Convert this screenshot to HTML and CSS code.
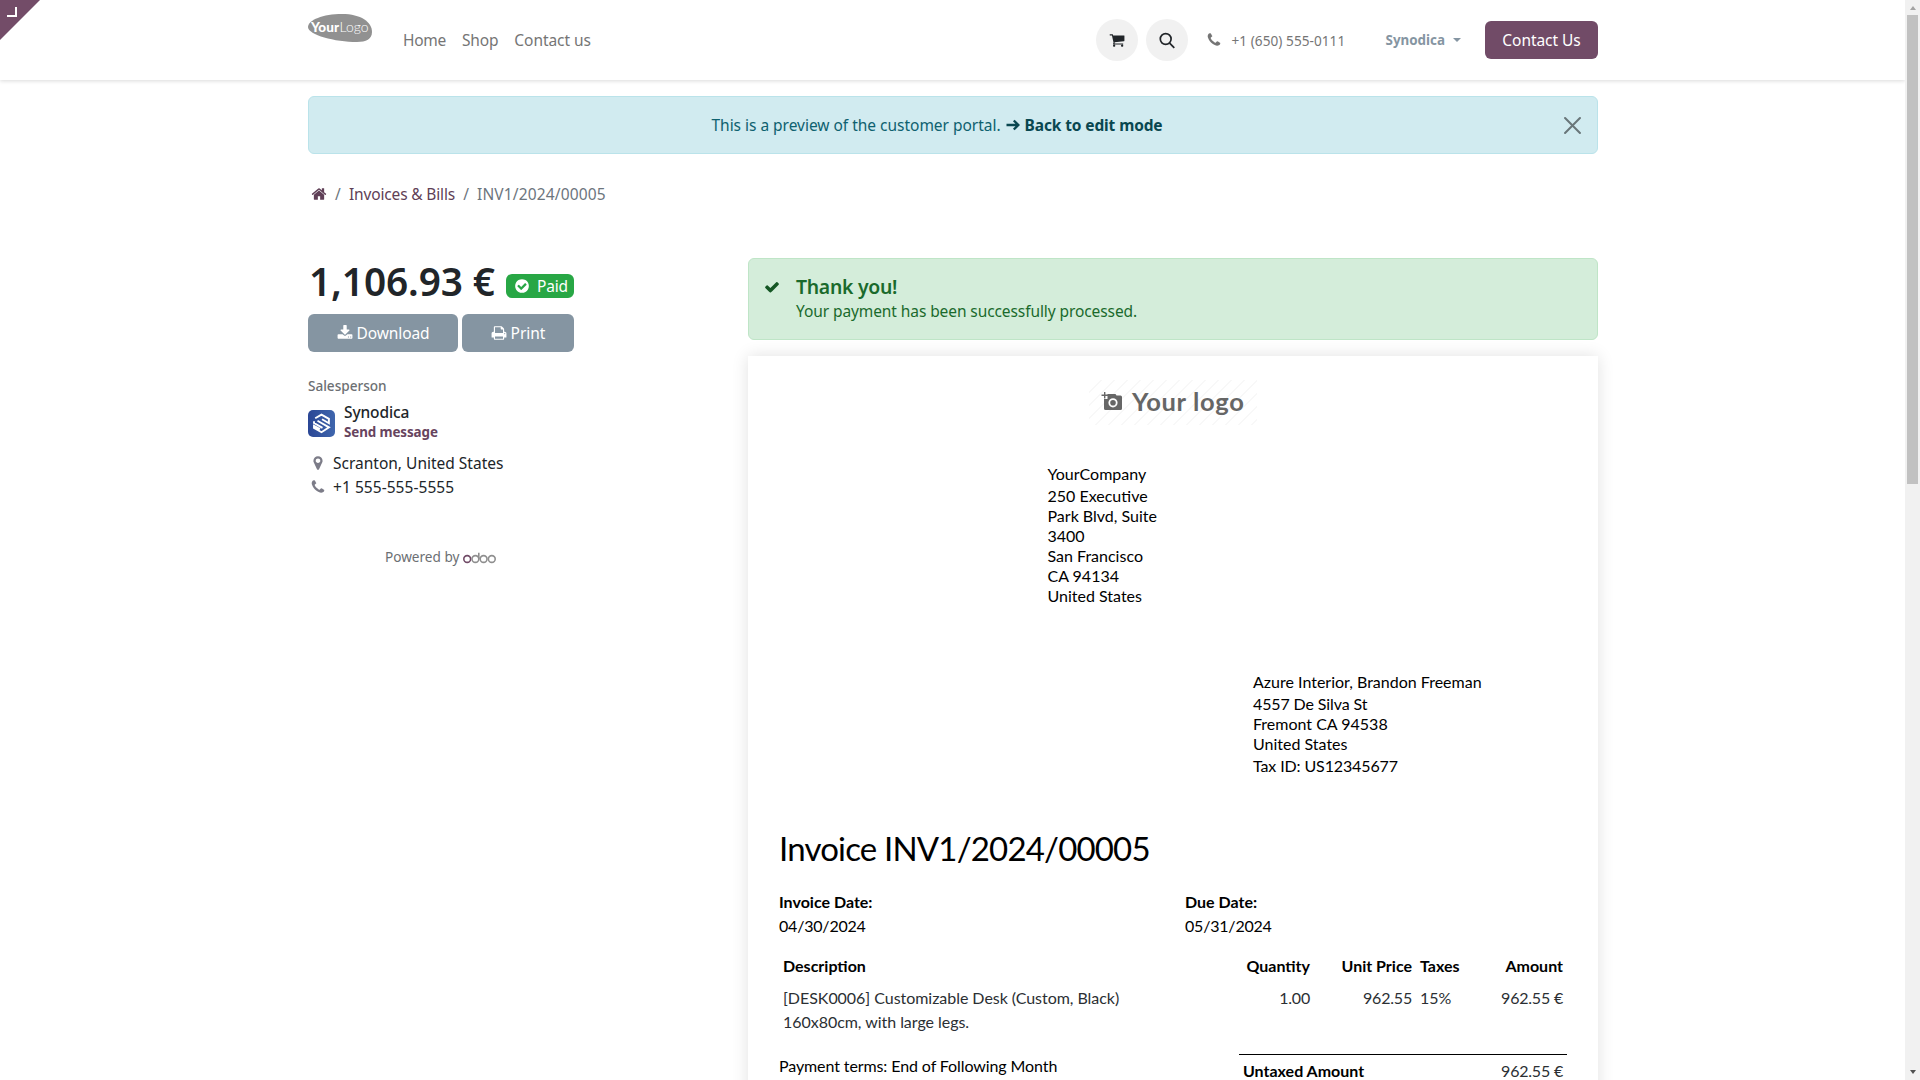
FILE: index.html
```html
<!DOCTYPE html>
<html lang="en">
<head>
<meta charset="utf-8">
<title>INV1/2024/00005</title>
<link rel="stylesheet" href="styles.css">
</head>
<body>
<div class="page">
  <header class="header">
    <div class="corner"><span class="corner-mark"></span></div>
    <div class="container header-row">
      <svg class="brand" viewBox="0 0 64 28">
        <path d="M0 13C0 6 15 0 34 0C53 0 64 8 64 18C64 25 58 28 49 28C27 28 0 21 0 13Z" fill="#919191"/>
        <text x="3" y="18" class="brand-bold" textLength="28" lengthAdjust="spacingAndGlyphs">Your</text>
        <text x="31.5" y="18" class="brand-light" textLength="29" lengthAdjust="spacingAndGlyphs">Logo</text>
      </svg>
      <nav class="nav"><a class="nav-home">Home</a><a class="nav-shop">Shop</a><a class="nav-contact">Contact us</a></nav>
      <div class="tools">
        <span class="round"><svg class="fa cart" viewBox="0 0 1792 1792"><path d="M704 1536q0 52-38 90t-90 38-90-38-38-90 38-90 90-38 90 38 38 90zm896 0q0 52-38 90t-90 38-90-38-38-90 38-90 90-38 90 38 38 90zm128-1088v512q0 24-16.500 42.500t-40.500 21.500l-1044 122q13 60 13 70 0 16-24 64h920q26 0 45 19t19 45-19 45-45 19h-1024q-26 0-45-19t-19-45q0-11 8-31.500t16-36 21.500-40 15.500-29.500l-177-823h-204q-26 0-45-19t-19-45 19-45 45-19h256q16 0 28.500 6.500t19.500 15.500 13 24.500 8 26 5.500 29.500 4.500 26h1201q26 0 45 19t19 45z"/></svg></span>
        <span class="round"><svg class="search" viewBox="0 0 16 16"><circle cx="6.7" cy="6.5" r="5.4"/><path d="M10.6 10.6L15.3 15.4"/></svg></span>
        <svg class="fa tel-icon" viewBox="0 0 1792 1792"><path d="M1600 1240q0 27-10 70.500t-21 68.500q-21 50-122 106-94 51-186 51-27 0-52.500-3.500t-57.500-12.500-47.500-14.500-55.500-20.500-49-18q-98-35-175-83-128-79-264.500-215.500t-215.500-264.500q-48-77-83-175-3-9-18-49t-20.500-55.500-14.500-47.500-12.500-57.500-3.500-52.500q0-92 51-186 56-101 106-122 25-11 68.500-21t70.500-10q14 0 21 3 18 6 53 76 11 19 30 54t35 63.500 31 53.500q3 4 17.500 25t21.500 35.500 7 28.500q0 20-28.500 50t-62 55-62 53-28.500 46q0 9 5 22.500t8.500 20.500 14 24 11.500 19q76 137 174 235t235 174q2 1 19 11.500t24 14 20.500 8.500 22.500 5q18 0 46-28.500t53-62 55-62 50-28.500q14 0 28.500 7t35.500 21.500 25 17.500q25 15 53.500 31t63.500 35 54 30q70 35 76 53 3 7 3 21z"/></svg>
        <span class="tel">+1 (650) 555-0111</span>
        <span class="user">Synodica</span><span class="caret"></span>
        <a class="cta">Contact Us</a>
      </div>
    </div>
  </header>

  <main class="container">
    <div class="alert info">
      <span class="info-text">This is a preview of the customer portal.</span>
      <svg class="arrow" viewBox="0 0 14 14"><path d="M0.5 7H12M7.8 2.5L12.3 7L7.8 11.5"/></svg>
      <b class="info-link">Back to edit mode</b>
      <svg class="close" viewBox="0 0 16 16"><path d="M1 1L15 15M15 1L1 15"/></svg>
    </div>

    <div class="crumbs">
      <svg class="fa home" viewBox="0 0 1792 1792"><path d="M1472 992v480q0 26-19 45t-45 19h-384v-384h-256v384h-384q-26 0-45-19t-19-45v-480q0-1 .5-3t.5-3l575-474 575 474q1 2 1 6zm223-69l-62 74q-8 9-21 11h-3q-13 0-21-7l-692-577-692 577q-12 8-24 7-13-2-21-11l-62-74q-8-10-7-23.500t11-21.500l719-599q32-26 76-26t76 26l244 204v-195q0-14 9-23t23-9h192q14 0 23 9t9 23v408l219 182q10 8 11 21.500t-7 23.500z"/></svg>
      <span class="sep">/</span><a class="crumb-link">Invoices &amp; Bills</a><span class="sep">/</span><span class="crumb-here">INV1/2024/00005</span>
    </div>

    <div class="columns">
      <aside class="side">
        <div class="amount-row">
          <span class="amount">1,106.93 €</span>
          <span class="badge"><svg class="fa" viewBox="0 0 1792 1792"><path d="M1412 734q0-28-18-46l-91-90q-19-19-45-19t-45 19l-408 407-226-226q-19-19-45-19t-45 19l-91 90q-18 18-18 46 0 27 18 45l362 362q19 19 45 19 27 0 46-19l543-543q18-18 18-45zm252 162q0 209-103 385.5t-279.5 279.500-385.500 103-385.500-103-279.500-279.500-103-385.500 103-385.500 279.500-279.500 385.500-103 385.500 103 279.500 279.500 103 385.500z"/></svg>Paid</span>
        </div>
        <div class="buttons">
          <a class="btn download"><svg class="fa" viewBox="0 0 1792 1792"><path d="M1344 1344q0-26-19-45t-45-19-45 19-19 45 19 45 45 19 45-19 19-45zm256 0q0-26-19-45t-45-19-45 19-19 45 19 45 45 19 45-19 19-45zm128-224v320q0 40-28 68t-68 28h-1472q-40 0-68-28t-28-68v-320q0-40 28-68t68-28h465l135 136q58 56 136 56t136-56l136-136h464q40 0 68 28t28 68zm-325-569q17 41-14 70l-448 448q-18 19-45 19t-45-19l-448-448q-31-29-14-70 17-39 59-39h256v-448q0-26 19-45t45-19h256q26 0 45 19t19 45v448h256q42 0 59 39z"/></svg>Download</a>
          <a class="btn print"><svg class="fa" viewBox="0 0 1792 1792"><path d="M448 1536h896v-256h-896v256zm0-640h896v-384h-160q-40 0-68-28t-28-68v-160h-640v640zm1152 64q0-26-19-45t-45-19-45 19-19 45 19 45 45 19 45-19 19-45zm128 0v416q0 13-9.500 22.500t-22.500 9.500h-224v160q0 40-28 68t-68 28h-960q-40 0-68-28t-28-68v-160h-224q-13 0-22.500-9.500t-9.500-22.500v-416q0-79 56.500-135.500t135.500-56.500h64v-544q0-40 28-68t68-28h672q40 0 88 20t76 48l152 152q28 28 48 76t20 88v256h64q79 0 135.500 56.500t56.500 135.500z"/></svg>Print</a>
        </div>
        <div class="label">Salesperson</div>
        <div class="person">
          <svg class="avatar" viewBox="0 0 27 27">
            <defs><linearGradient id="g" x1="0" x2="1"><stop offset="0" stop-color="#2a4695"/><stop offset="1" stop-color="#3f66ad"/></linearGradient></defs>
            <rect width="27" height="27" rx="5" fill="url(#g)"/>
            <path d="M7.200 8.200L13.500 4.600L20.900 8.800V13.200L14 9.200M6 11.200V13L14.500 17.900M9.500 10.800L21 17.400L13.500 22.200L6 17.900V15.800L12 19.200" fill="none" stroke="#fff" stroke-width="1.900"/>
          </svg>
          <div>
            <div class="person-name">Synodica</div>
            <div class="person-link">Send message</div>
          </div>
        </div>
        <div class="contact">
          <svg class="fa" viewBox="0 0 1792 1792"><path d="M1152 640q0-106-75-181t-181-75-181 75-75 181 75 181 181 75 181-75 75-181zm256 0q0 109-33 179l-364 774q-16 33-47.500 52t-67.500 19-67.500-19-46.500-52l-365-774q-33-70-33-179 0-212 150-362t362-150 362 150 150 362z"/></svg><span class="city">Scranton, United States</span>
        </div>
        <div class="contact">
          <svg class="fa" viewBox="0 0 1792 1792"><path d="M1600 1240q0 27-10 70.500t-21 68.500q-21 50-122 106-94 51-186 51-27 0-52.500-3.500t-57.500-12.500-47.500-14.500-55.500-20.500-49-18q-98-35-175-83-128-79-264.500-215.500t-215.500-264.500q-48-77-83-175-3-9-18-49t-20.500-55.500-14.500-47.500-12.500-57.500-3.500-52.500q0-92 51-186 56-101 106-122 25-11 68.500-21t70.500-10q14 0 21 3 18 6 53 76 11 19 30 54t35 63.500 31 53.500q3 4 17.500 25t21.500 35.500 7 28.500q0 20-28.500 50t-62 55-62 53-28.500 46q0 9 5 22.500t8.500 20.500 14 24 11.500 19q76 137 174 235t235 174q2 1 19 11.500t24 14 20.500 8.500 22.500 5q18 0 46-28.500t53-62 55-62 50-28.500q14 0 28.500 7t35.500 21.500 25 17.500q25 15 53.500 31t63.500 35 54 30q70 35 76 53 3 7 3 21z"/></svg><span>+1 555-555-5555</span>
        </div>
        <div class="powered">Powered by
          <svg class="odoo" viewBox="0 0 33 12" fill="none" stroke="#8f8f8f" stroke-width="1.600"><circle cx="4.200" cy="7" r="3.400" stroke="#714b67"/><circle cx="12.400" cy="7" r="3.400"/><path d="M15.800 7V0.800"/><circle cx="20.600" cy="7" r="3.400"/><circle cx="28.800" cy="7" r="3.400"/></svg>
        </div>
      </aside>

      <section class="content">
        <div class="alert success">
          <svg class="fa check" viewBox="0 0 1792 1792"><path d="M1671 566q0 40-28 68l-724 724-136 136q-28 28-68 28t-68-28l-136-136-362-362q-28-28-28-68t28-68l136-136q28-28 68-28t68 28l294 295 656-657q28-28 68-28t68 28l136 136q28 28 28 68z"/></svg>
          <div>
            <div class="thanks">Thank you!</div>
            <div class="thanks-text">Your payment has been successfully processed.</div>
          </div>
        </div>

        <article class="invoice">
          <div class="logo">
            <svg class="camera" viewBox="0 0 22 20"><path fill="#666" fill-rule="evenodd" d="M6.500 6V3H14.500L15.500 4.500H19.500Q21 4.500 21 6V17.500Q21 19 19.500 19H4.500Q3 19 3 17.500V8H6.500ZM12 7.200A4.600 4.600 0 1 0 12 16.400A4.600 4.600 0 1 0 12 7.200ZM12 9A2.800 2.800 0 1 1 12 14.600A2.800 2.800 0 1 1 12 9Z"/><path d="M0.500 4.300H7M3.700 1V7.500" stroke="#666" stroke-width="1.400"/></svg>
            <span class="logo-text">Your logo</span>
          </div>
          <div class="company">
            <div class="name">YourCompany</div>
            <div>250 Executive</div><div>Park Blvd, Suite</div><div>3400</div><div>San Francisco</div><div>CA 94134</div><div>United States</div>
          </div>
          <div class="customer">
            <div class="name">Azure Interior, Brandon Freeman</div>
            <div class="tight">4557 De Silva St</div><div>Fremont CA 94538</div><div>United States</div>
            <div class="name tight">Tax ID: US12345677</div>
          </div>
          <h2 class="title">Invoice INV1/2024/00005</h2>
          <div class="dates">
            <div><b>Invoice Date:</b><br><span class="num">04/30/2024</span></div>
            <div><b>Due Date:</b><br><span class="num">05/31/2024</span></div>
          </div>
          <div class="line head"><span>Description</span><span>Quantity</span><span>Unit Price</span><span class="tax">Taxes</span><span>Amount</span></div>
          <div class="line item"><span>[DESK0006] Customizable Desk (Custom, Black)<br>160x80cm, with large legs.</span><span class="num">1.00</span><span class="num">962.55</span><span class="tax">15%</span><span class="num">962.55 €</span></div>
          <div class="bottom">
            <div class="terms">Payment terms: End of Following Month</div>
            <div class="total"><b>Untaxed Amount</b><span class="num">962.55 €</span></div>
          </div>
        </article>
      </section>
    </div>
  </main>
</div>
<div class="scrollbar"><span class="up"></span><span class="thumb"></span><span class="down"></span></div>
</body>
</html>
```

FILE: styles.css
```css
* { box-sizing: border-box; }
body {
  margin: 0;
  display: grid;
  grid-template-columns: 1fr 15px;
  height: 100vh;
  overflow: hidden;
  background: #fff;
  color: #212529;
  font: 15.5px/24px "Noto Sans", "Open Sans", sans-serif;
}
.page { height: 100vh; overflow: hidden; }
.container { width: 1290px; margin: 0 auto 0 308px; }
.fa { width: 16px; height: 16px; fill: currentColor; flex: none; }

/* header */
.header { position: relative; height: 80px; box-shadow: 0 1px 4px rgba(0,0,0,.15); }
.corner {
  position: absolute; left: 0; top: 0; width: 40px; height: 40px;
  background: #734c68; clip-path: polygon(0 0, 100% 0, 0 100%);
}
.corner-mark {
  position: absolute; left: 7px; top: 7px; width: 10px; height: 10px;
  border: solid #fff; border-width: 0 2px 2px 0;
}
.header-row { display: flex; align-items: flex-start; height: 80px; }
.brand { width: 64px; height: 28px; margin-top: 14px; flex: none; }
.brand text { fill: #fff; font-family: Lato, sans-serif; font-size: 14px; }
.brand-bold { font-weight: 900; }
.brand-light { font-weight: 300; }
.nav { display: flex; margin: 28px 0 0 31px; color: #757575; }
.nav a { margin-right: 16px; }
.nav-home { letter-spacing: -.3px; }
.nav-shop { letter-spacing: -.15px; }
.nav-contact { letter-spacing: -.05px; }
.tools { display: flex; align-items: center; height: 80px; margin-left: auto; }
.round {
  display: flex; align-items: center; justify-content: center;
  width: 42px; height: 42px; margin-right: 8px; border-radius: 50%; background: #f1f1f1;
}
.cart { width: 16px; height: 16px; }
.search { width: 16px; height: 17px; fill: none; stroke: #212529; stroke-width: 1.7; }
.tel-icon { margin-left: 10px; color: #757575; }
.tel { width: 113px; margin: 1px 0 0 10px; color: #757575; font-size: 13.6px; letter-spacing: .05px; white-space: nowrap; }
.user { margin-left: 41px; color: #8595a2; font-size: 13.4px; font-weight: 700; }
.caret { margin-left: 8px; border: 4px solid transparent; border-top-color: #8595a2; border-bottom: 0; }
.cta {
  width: 113px; height: 38px; margin-left: 24px; border-radius: 6px; background: #714b67;
  color: #fff; line-height: 39px; text-align: center; letter-spacing: -.05px;
}

/* alerts */
.alert { display: flex; border: 1px solid; border-radius: 6px; }
.info {
  position: relative; justify-content: center; align-items: center;
  height: 58px; margin-top: 16px; padding-right: 32px;
  background: #d1ebf0; border-color: #bae3ea; color: #0e616f;
}
.info-text { letter-spacing: -.02px; }
.arrow { width: 14px; height: 14px; margin: 0 5px; fill: none; stroke: #094750; stroke-width: 2.4; }
.info-link { color: #094750; letter-spacing: -.12px; }
.close { position: absolute; right: 16px; top: 20px; width: 17px; height: 17px; fill: none; stroke: #697679; stroke-width: 1.9; stroke-linecap: round; }
.success { height: 82px; padding: 15px 16px; background: #d4edda; border-color: #bfe5c7; color: #1a6a2c; }
.check { margin: 5px 16px 0 -1px; color: #155724; }
.thanks { font-size: 19.4px; font-weight: 600; line-height: 25px; letter-spacing: -.28px; }
.thanks-text { letter-spacing: -.09px; }

/* breadcrumb */
.crumbs { display: flex; align-items: center; height: 24px; margin: 28px 0 52px; color: #6c757d; }
.home { margin-left: 3px; color: #5f3f56; }
.sep { width: 22px; text-align: center; }
.crumb-link { color: #5f3f56; letter-spacing: -.16px; }
.crumb-here { letter-spacing: .14px; }

/* sidebar */
.columns { display: flex; }
.side { width: 440px; }
.amount-row { display: flex; height: 48px; margin-top: -1px; }
.amount { width: 198px; font-size: 38.8px; font-weight: 600; line-height: 48px; letter-spacing: -.1px; white-space: nowrap; padding-left: 1px; }
.badge {
  display: flex; align-items: center; gap: 7px; width: 68px; height: 24px; margin-top: 17px;
  padding-left: 8px; border-radius: 6px; background: #28a745; color: #fff; letter-spacing: -.15px;
}
.buttons { display: flex; gap: 4px; margin-top: 9px; }
.btn {
  display: flex; align-items: center; justify-content: center; gap: 4px;
  height: 38px; border-radius: 6px; background: #8595a2; color: #fff;
}
.download { width: 150px; letter-spacing: -.1px; }
.print { width: 112px; }
.label { margin-top: 23px; color: #6c6f73; font-size: 13.6px; font-weight: 500; line-height: 21px; letter-spacing: -.02px; }
.person { display: flex; margin-top: 6px; line-height: 20px; }
.avatar { width: 27px; height: 27px; margin: 8px 9px 0 0; }
.person-name { font-weight: 500; letter-spacing: -.12px; }
.person-link { color: #67445e; font-size: 13.4px; font-weight: 700; letter-spacing: -.1px; }
.contact { display: flex; align-items: center; gap: 7px; padding-left: 2px; }
.contact .fa { color: #7c7c88; }
.contact + .contact { letter-spacing: .05px; }
.person + .contact { margin-top: 9px; }
.powered { margin-top: 47px; padding-left: 77px; color: #6c6f73; font-size: 13.6px; line-height: 21px; }
.odoo { width: 33px; height: 12px; vertical-align: -2px; }

/* invoice sheet */
.content { width: 850px; }
.invoice {
  height: 900px; margin-top: 16px; padding: 24px 31px; background: #fff; color: #000;
  box-shadow: 0 0 16px rgba(0,0,0,.12);
  font: 16px/24px Lato, sans-serif;
}
.logo {
  display: flex; align-items: center; gap: 9px; width: 168px; height: 45px; margin: 0 auto; padding-left: 12px;
  background: repeating-linear-gradient(135deg, #fff 0 8px, #f8f8f8 8px 9.200px);
  color: #666; font-size: 25.5px; font-weight: 700; white-space: nowrap;
}
.logo-text { margin-top: -4px; letter-spacing: .65px; }
.camera { width: 22px; height: 20px; flex: none; margin-top: -4px; }
.company { margin: 37px 0 0 268.500px; line-height: 20px; }
.customer { margin: 64px 0 0 474px; line-height: 20px; }
.name { line-height: 24px; }
.tight { letter-spacing: -.12px; }
.num { letter-spacing: -.2px; }
.title { margin: 50px 0 22px; font-size: 33px; font-weight: 400; line-height: 40px; letter-spacing: -.82px; }
.dates { display: grid; grid-template-columns: 406px 1fr; }
.line { display: grid; grid-template-columns: 1fr 90px 102px 80px 71px; padding: 0 4px; text-align: right; }
.line > :first-child, .line .tax { text-align: left; }
.line .tax { padding-left: 8px; }
.head { margin: 16px 0 8px; font-weight: 700; }
.item { color: #2b2f33; letter-spacing: -.04px; }
.bottom { display: flex; justify-content: space-between; margin-top: 20px; }
.terms { letter-spacing: -.1px; }
.total { display: flex; justify-content: space-between; width: 328px; padding: 4px 4px 0; border-top: 1px solid #000; }
.total span { color: #2b2f33; }

/* scrollbar */
.scrollbar { display: flex; flex-direction: column; align-items: center; background: #f1f1f1; height: 100vh; }
.up { margin-top: 6px; border: 3.5px solid transparent; border-top: 0; border-bottom: 4px solid #a3a3a3; }
.thumb { width: 11px; height: 469px; margin-top: 5px; background: #c1c1c1; }
.down { margin: auto 0 6px; border: 3.5px solid transparent; border-bottom: 0; border-top: 4px solid #505050; }
```
